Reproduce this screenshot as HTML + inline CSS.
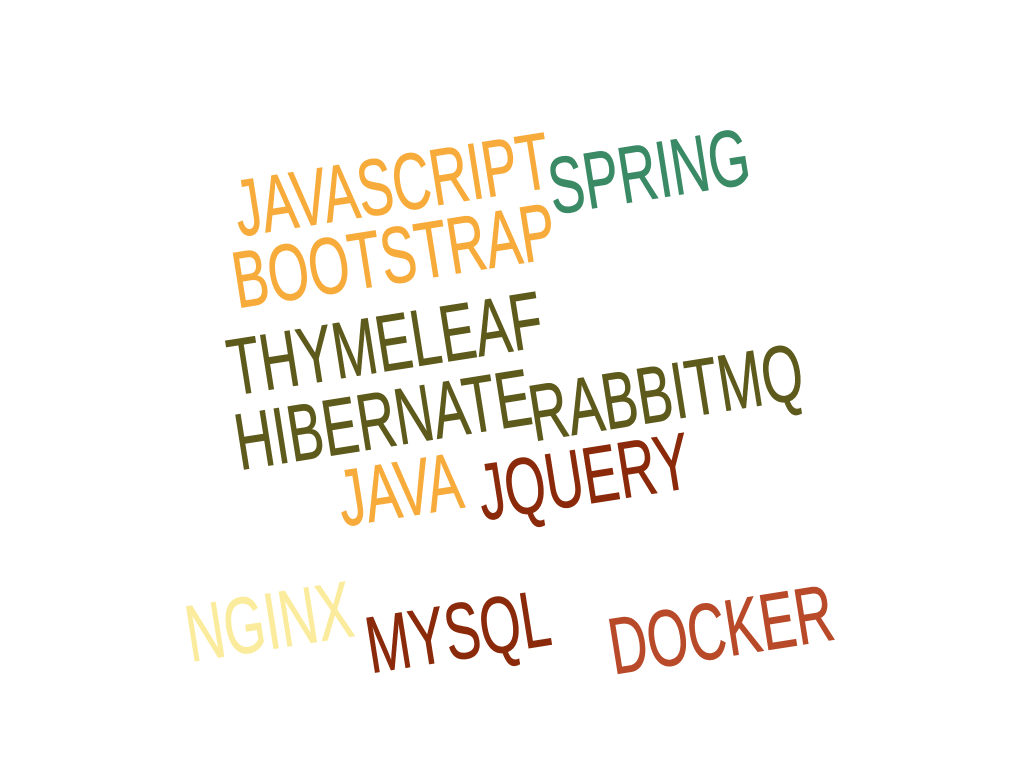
<!DOCTYPE html>
<html><head><meta charset="utf-8"><style>
html,body{margin:0;padding:0;background:#fff;width:1024px;height:768px;overflow:hidden;}
.w{position:absolute;font-family:"Liberation Sans Narrow","Liberation Sans",sans-serif;font-size:80px;line-height:1;white-space:nowrap;transform:translate(-50%,-50%) rotate(-9deg) scaleX(0.66);-webkit-text-stroke:0.8px currentColor;}
</style></head><body>
<div class="w" style="left:392px;top:185px;color:#f7ab3b">JAVASCRIPT</div>
<div class="w" style="left:649px;top:172px;color:#3b8a66">SPRING</div>
<div class="w" style="left:394px;top:256px;color:#f7ab3b">BOOTSTRAP</div>
<div class="w" style="left:385px;top:344px;color:#5d5a1c">THYMELEAF</div>
<div class="w" style="left:383px;top:420px;color:#5d5a1c">HIBERNATE</div>
<div class="w" style="left:666px;top:393px;color:#5d5a1c">RABBITMQ</div>
<div class="w" style="left:400px;top:490px;color:#f7ab3b">JAVA</div>
<div class="w" style="left:584px;top:477px;color:#8a2a0a">JQUERY</div>
<div class="w" style="left:269px;top:622px;color:#fbeb9c">NGINX</div>
<div class="w" style="left:458px;top:632px;color:#8a2a0a">MYSQL</div>
<div class="w" style="left:721px;top:630px;color:#b84a2a">DOCKER</div>
</body></html>
